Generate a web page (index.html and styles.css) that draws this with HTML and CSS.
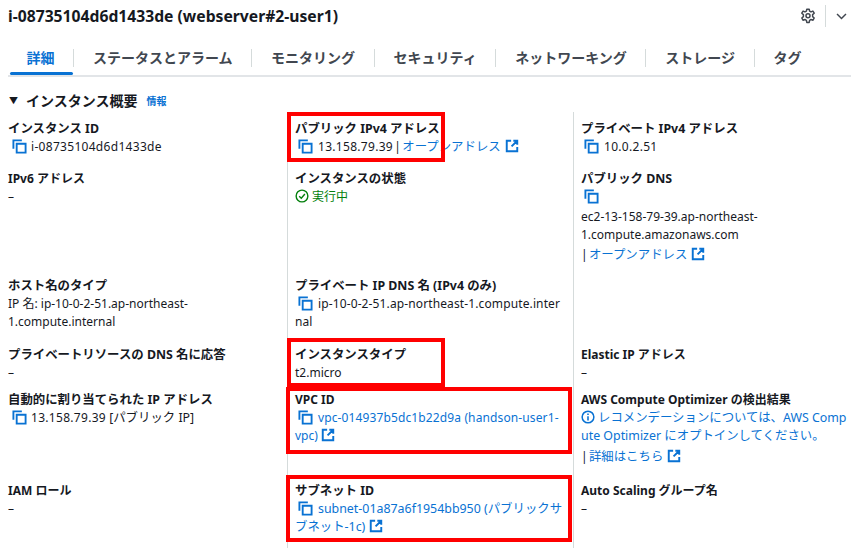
FILE: index.html
```html
<!DOCTYPE html>
<html lang="ja">
<head>
<meta charset="utf-8">
<title>インスタンス概要</title>
<link rel="stylesheet" href="styles.css">
</head>
<body>
<svg class="defs" width="0" height="0" aria-hidden="true">
  <defs>
    <symbol id="copy" viewBox="0 0 16 16"><path d="M1.5 10.5V1.5H10.5M5 5H14.5V14.5H5Z" fill="none" stroke="currentColor" stroke-width="2"/></symbol>
    <symbol id="ext" viewBox="0 0 16 16"><path d="M7 2H2V14H14V9M9.5 2H14V6.5M14 2L7.5 8.5" fill="none" stroke="currentColor" stroke-width="2.2"/></symbol>
  </defs>
</svg>
<div class="page">
  <header class="head">
    <h1 class="title">i-08735104d6d1433de (webserver#2-user1)</h1>
    <div class="actions">
      <svg class="gear" viewBox="0 0 16 16"><path d="M6.8 1.2H9.2L9.6 3.2L11 3.9L12.9 3.1L14.2 5.2L12.6 6.6V8.6L14.2 10L13 12.2L11 11.5L9.6 12.3L9.2 14.4H6.8L6.4 12.3L5 11.5L3 12.2L1.8 10L3.4 8.6V6.6L1.8 5.2L3.1 3.1L5 3.9L6.4 3.2Z" fill="none" stroke="currentColor" stroke-width="1.5" stroke-linejoin="round"/><circle cx="8" cy="7.7" r="2" fill="none" stroke="currentColor" stroke-width="1.5"/></svg>
      <span class="act-sep"></span>
      <svg class="chev" viewBox="0 0 16 16"><path d="M2.5 5L8 10.5L13.5 5" fill="none" stroke="currentColor" stroke-width="1.8"/></svg>
    </div>
  </header>
  <nav class="tabs">
    <a class="tab active">詳細</a>
    <a class="tab">ステータスとアラーム</a>
    <a class="tab">モニタリング</a>
    <a class="tab">セキュリティ</a>
    <a class="tab">ネットワーキング</a>
    <a class="tab">ストレージ</a>
    <a class="tab">タグ</a>
  </nav>
  <h2 class="section"><span class="caret">▼</span>インスタンス概要<a class="info">情報</a></h2>
  <div class="grid">
    <div class="cell r1"><div class="lab cj">インスタンス ID</div><div class="val num"><svg class="ic"><use href="#copy"/></svg><span class="pad">i-08735104d6d1433de</span></div></div>
    <div class="cell r1 ruled"><div class="lab cj">パブリック IPv4 アドレス</div><div class="val tight"><svg class="ic"><use href="#copy"/></svg><span class="pad num">13.158.79.39</span> | <a class="lnk cj">オープンアドレス</a><svg class="ex"><use href="#ext"/></svg></div></div>
    <div class="cell r1 ruled"><div class="lab cj">プライベート IPv4 アドレス</div><div class="val"><svg class="ic"><use href="#copy"/></svg><span class="pad num">10.0.2.51</span></div></div>

    <div class="cell r2"><div class="lab">IPv6 アドレス</div><div class="val">–</div></div>
    <div class="cell r2 ruled"><div class="lab cj">インスタンスの状態</div><div class="val ok"><svg class="okic" viewBox="0 0 16 16"><circle cx="8" cy="8" r="6.7" fill="none" stroke="currentColor" stroke-width="1.6"/><path d="M4.8 8.2L7.2 10.6L11.3 5.8" fill="none" stroke="currentColor" stroke-width="1.6"/></svg>実行中</div></div>
    <div class="cell r2 ruled"><div class="lab cj">パブリック DNS</div><div class="val"><svg class="ic"><use href="#copy"/></svg></div><div class="val v2">ec2-13-158-79-39.ap-northeast-<br>1.compute.amazonaws.com</div><div class="val v2 tight">| <a class="lnk cj">オープンアドレス</a><svg class="ex"><use href="#ext"/></svg></div></div>

    <div class="cell r3"><div class="lab cj">ホスト名のタイプ</div><div class="val">IP 名: ip-10-0-2-51.ap-northeast-<br>1.compute.internal</div></div>
    <div class="cell r3 ruled"><div class="lab cj">プライベート IP DNS 名 (IPv4 のみ)</div><div class="val"><svg class="ic"><use href="#copy"/></svg><span class="pad fine">ip-10-0-2-51.ap-northeast-1.compute.inter</span></div><div class="val">nal</div></div>
    <div class="cell r3 ruled"></div>

    <div class="cell r4"><div class="lab cj">プライベートリソースの DNS 名に応答</div><div class="val">–</div></div>
    <div class="cell r4 ruled"><div class="lab cj">インスタンスタイプ</div><div class="val">t2.micro</div></div>
    <div class="cell r4 ruled"><div class="lab">Elastic IP アドレス</div><div class="val">–</div></div>

    <div class="cell r5"><div class="lab cj">自動的に割り当てられた IP アドレス</div><div class="val"><svg class="ic"><use href="#copy"/></svg><span class="pad"><span class="num">13.158.79.39</span> <span class="cj">[パブリック IP]</span></span></div></div>
    <div class="cell r5 ruled"><div class="lab">VPC ID</div><div class="val"><svg class="ic"><use href="#copy"/></svg><a class="lnk pad fine">vpc-014937b5dc1b22d9a (handson-user1-</a></div><div class="val"><a class="lnk">vpc)</a><svg class="ex exn"><use href="#ext"/></svg></div></div>
    <div class="cell r5 ruled"><div class="lab">AWS Compute Optimizer の検出結果</div><div class="val lnk cj"><svg class="infoic" viewBox="0 0 16 16"><circle cx="8" cy="8" r="6.7" fill="none" stroke="currentColor" stroke-width="1.7"/><path d="M8 7V12M8 4V5.8" fill="none" stroke="currentColor" stroke-width="1.8"/></svg>レコメンデーションについては、AWS Comp</div><div class="val lnk cj">ute Optimizer にオプトインしてください。</div><div class="val v3 tight">| <a class="lnk cj">詳細はこちら</a><svg class="ex"><use href="#ext"/></svg></div></div>

    <div class="cell r6"><div class="lab">IAM ロール</div><div class="val">–</div></div>
    <div class="cell r6 ruled"><div class="lab cj">サブネット ID</div><div class="val"><svg class="ic"><use href="#copy"/></svg><a class="lnk pad cj">subnet-01a87a6f1954bb950 (パブリックサ</a></div><div class="val"><a class="lnk cj">ブネット-1c)</a><svg class="ex"><use href="#ext"/></svg></div></div>
    <div class="cell r6 ruled"><div class="lab">Auto Scaling グループ名</div><div class="val">–</div></div>
  </div>
  <div class="mark m1"></div>
  <div class="mark m2"></div>
  <div class="mark m3"></div>
  <div class="mark m4"></div>
</div>
</body>
</html>
```

FILE: styles.css
```css
* { box-sizing: border-box; }
html, body { margin: 0; padding: 0; background: #fff; }
body { width: 851px; height: 548px; overflow: hidden; font-family: "Noto Sans", "Noto Sans CJK JP", sans-serif; font-size: 12px; line-height: 18px; color: #16191f; }
.defs { position: absolute; }
.page { position: relative; height: 548px; overflow: hidden; }
.head { display: flex; justify-content: space-between; align-items: center; height: 32px; padding: 0 3px 0 8px; }
.title { margin: 0; font-size: 15.7px; font-weight: 700; line-height: 32px; }
.actions { display: flex; align-items: center; color: #414750; }
.gear { width: 16px; height: 16px; }
.act-sep { width: 1px; height: 22px; background: #d5dbdb; margin: 0 9px; }
.chev { width: 13px; height: 13px; }
.tabs { display: flex; align-items: center; height: 36px; margin: 9px 0 0 8px; border-bottom: 2px solid #e2e5e8; }
.tab { position: relative; height: 18px; line-height: 18px; font-size: 14px; font-weight: 700; color: #414750; padding: 0 18.5px 0 19px; border-right: 1px solid #d5dbdb; white-space: nowrap; }
.tab:first-child { padding: 0; width: 66px; text-align: center; }
.tab:last-child { border-right: 0; }
.active { color: #0972d3; }
.active::after { content: ""; position: absolute; left: 2px; bottom: -8px; width: 63px; height: 3px; border-radius: 2px; background: #0972d3; }
.section { display: flex; align-items: center; margin: 15px 0 0 9px; font-size: 14px; font-weight: 700; line-height: 18px; }
.caret { font-size: 9px; width: 17px; }
.info { margin-left: 9px; font-size: 10px; color: #0972d3; }
.grid { display: grid; grid-template-columns: 279px 286px 278px; margin: 2px 0 0 8px; }
.cell { padding: 1px 6px 0 0; }
.ruled { border-left: 1px solid #d5dbdb; padding-left: 7px; }
.cell.r1 { height: 57px; padding-top: 8px; }
.r2 { height: 107px; }
.r3 { height: 69px; }
.r4 { height: 45px; }
.r5 { height: 91px; }
.r6 { height: 80px; }
.lab { font-weight: 700; height: 18px; white-space: nowrap; }
.val { min-height: 18px; white-space: nowrap; }
.v2 { margin-top: 2px; }
.v3 { margin-top: 3px; }
.cj { font-size: 12.4px; }
.num { letter-spacing: 0.3px; }
.fine { letter-spacing: 0.12px; }
.tight { word-spacing: -1.8px; }
.ic { width: 15px; height: 15px; color: #0972d3; vertical-align: -3px; margin-left: 4px; }
.ruled .ic { margin-left: 3px; }
.ex { width: 14px; height: 14px; color: #0972d3; vertical-align: -2px; margin-left: 4px; }
.exn { margin-left: 3px; }
.pad { margin-left: 4px; }
.ruled .pad { margin-left: 5px; }
.lnk { color: #0972d3; }
.ok { color: #037f0c; }
.okic { width: 14px; height: 14px; vertical-align: -2px; margin-right: 3px; }
.infoic { width: 14px; height: 14px; vertical-align: -2px; margin-right: 3px; }
.mark { position: absolute; border: 4px solid #f00; }
.m1 { left: 287px; top: 112px; width: 158px; height: 50px; }
.m2 { left: 287px; top: 338px; width: 158px; height: 49px; }
.m3 { left: 286px; top: 387px; width: 286px; height: 67px; }
.m4 { left: 286px; top: 475px; width: 286px; height: 67px; }
```
